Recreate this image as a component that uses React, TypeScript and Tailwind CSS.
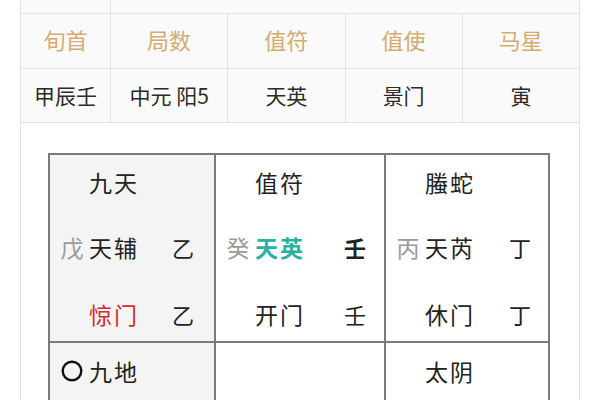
const font = { fontFamily: '"Noto Sans CJK SC", "Noto Sans", sans-serif' };

type Line = {
  stem?: React.ReactNode;
  main?: React.ReactNode;
  right?: React.ReactNode;
  mt: string;
};

function CellLine({ stem, main, right, mainW, mt }: Line & { mainW: string }) {
  return (
    <div className={`flex h-[30px] items-center ${mt}`}>
      <span className="ml-[11px] flex w-[22px] justify-center text-[23px] text-[#9a9a9a]">{stem}</span>
      <span className={`ml-[6px] ${mainW} text-[23px] tracking-[2px] text-[#222]`}>{main}</span>
      <span className="text-[22px] text-[#222]">{right}</span>
    </div>
  );
}

const heads = ["旬首", "局数", "值符", "值使", "马星"];
const vals = ["甲辰壬", "中元\u00a0阳5", "天英", "景门", "寅"];

export default function App() {
  return (
    <div className="h-[400px] w-[600px] overflow-hidden bg-white" style={font}>
      <div className="mx-[20px] h-full border-x border-[#e2e2e2]">
        <div className="flex h-[14px] border-b border-[#e2e2e2] bg-[#fafafa]">
          <div className="w-[90px] border-r border-[#e2e2e2]" />
          <div className="flex-1" />
        </div>
        <div className="flex h-[55px] border-b border-[#e2e2e2] bg-[#fafafa]">
          {heads.map((h, i) => (
            <div
              key={h}
              className={`flex items-center justify-center pb-[3px] text-[22px] text-[#d4ab70] ${
                i === 0 ? "w-[90px]" : "flex-1"
              } ${i < 4 ? "border-r border-[#e2e2e2]" : ""}`}
            >
              {h}
            </div>
          ))}
        </div>
        <div className="flex h-[54px] border-b border-[#e2e2e2] bg-[#fafafa]">
          {vals.map((v, i) => (
            <div
              key={v}
              className={`flex items-center justify-center text-[21px] text-[#2a2a2a] ${
                i === 0 ? "w-[90px]" : "flex-1"
              } ${i < 4 ? "border-r border-[#e2e2e2]" : ""}`}
            >
              {v}
            </div>
          ))}
        </div>

        <div className="ml-[27px] mt-[30px] w-[502px] border-2 border-b-0 border-[#7a7a7a]">
          <div className="flex h-[188px] border-b-2 border-[#7a7a7a]">
            <div className="w-[166px] border-r-2 border-[#7a7a7a] bg-[#f4f4f4]">
              <CellLine mainW="w-[83px]" mt="mt-[12px]" main="九天" />
              <CellLine mainW="w-[83px]" mt="mt-[35px]" stem="戊" main="天辅" right="乙" />
              <CellLine mainW="w-[83px]" mt="mt-[37px]" main={<span className="text-[#d42a2a]">惊门</span>} right="乙" />
            </div>
            <div className="w-[170px] border-r-2 border-[#7a7a7a]">
              <CellLine mainW="w-[89px]" mt="mt-[12px]" main="值符" />
              <CellLine
                mainW="w-[89px]"
                mt="mt-[35px]"
                stem="癸"
                main={<span className="font-bold text-[#27b3a0]">天英</span>}
                right={<span className="font-bold">壬</span>}
              />
              <CellLine mainW="w-[89px]" mt="mt-[37px]" main="开门" right="壬" />
            </div>
            <div className="w-[162px]">
              <CellLine mainW="w-[84px]" mt="mt-[12px]" main="螣蛇" />
              <CellLine mainW="w-[84px]" mt="mt-[35px]" stem="丙" main="天芮" right="丁" />
              <CellLine mainW="w-[84px]" mt="mt-[37px]" main="休门" right="丁" />
            </div>
          </div>
          <div className="flex h-[60px]">
            <div className="w-[166px] border-r-2 border-[#7a7a7a] bg-[#f4f4f4]">
              <CellLine
                mainW="w-[83px]"
                mt="mt-[13px]"
                stem={
                  <svg width="22" height="22" viewBox="0 0 22 22">
                    <circle cx="11" cy="11" r="9.3" fill="none" stroke="#111" strokeWidth="2.4" />
                  </svg>
                }
                main="九地"
              />
            </div>
            <div className="w-[170px] border-r-2 border-[#7a7a7a]" />
            <div className="w-[162px]">
              <CellLine mainW="w-[84px]" mt="mt-[13px]" main="太阴" />
            </div>
          </div>
        </div>
      </div>
    </div>
  );
}
